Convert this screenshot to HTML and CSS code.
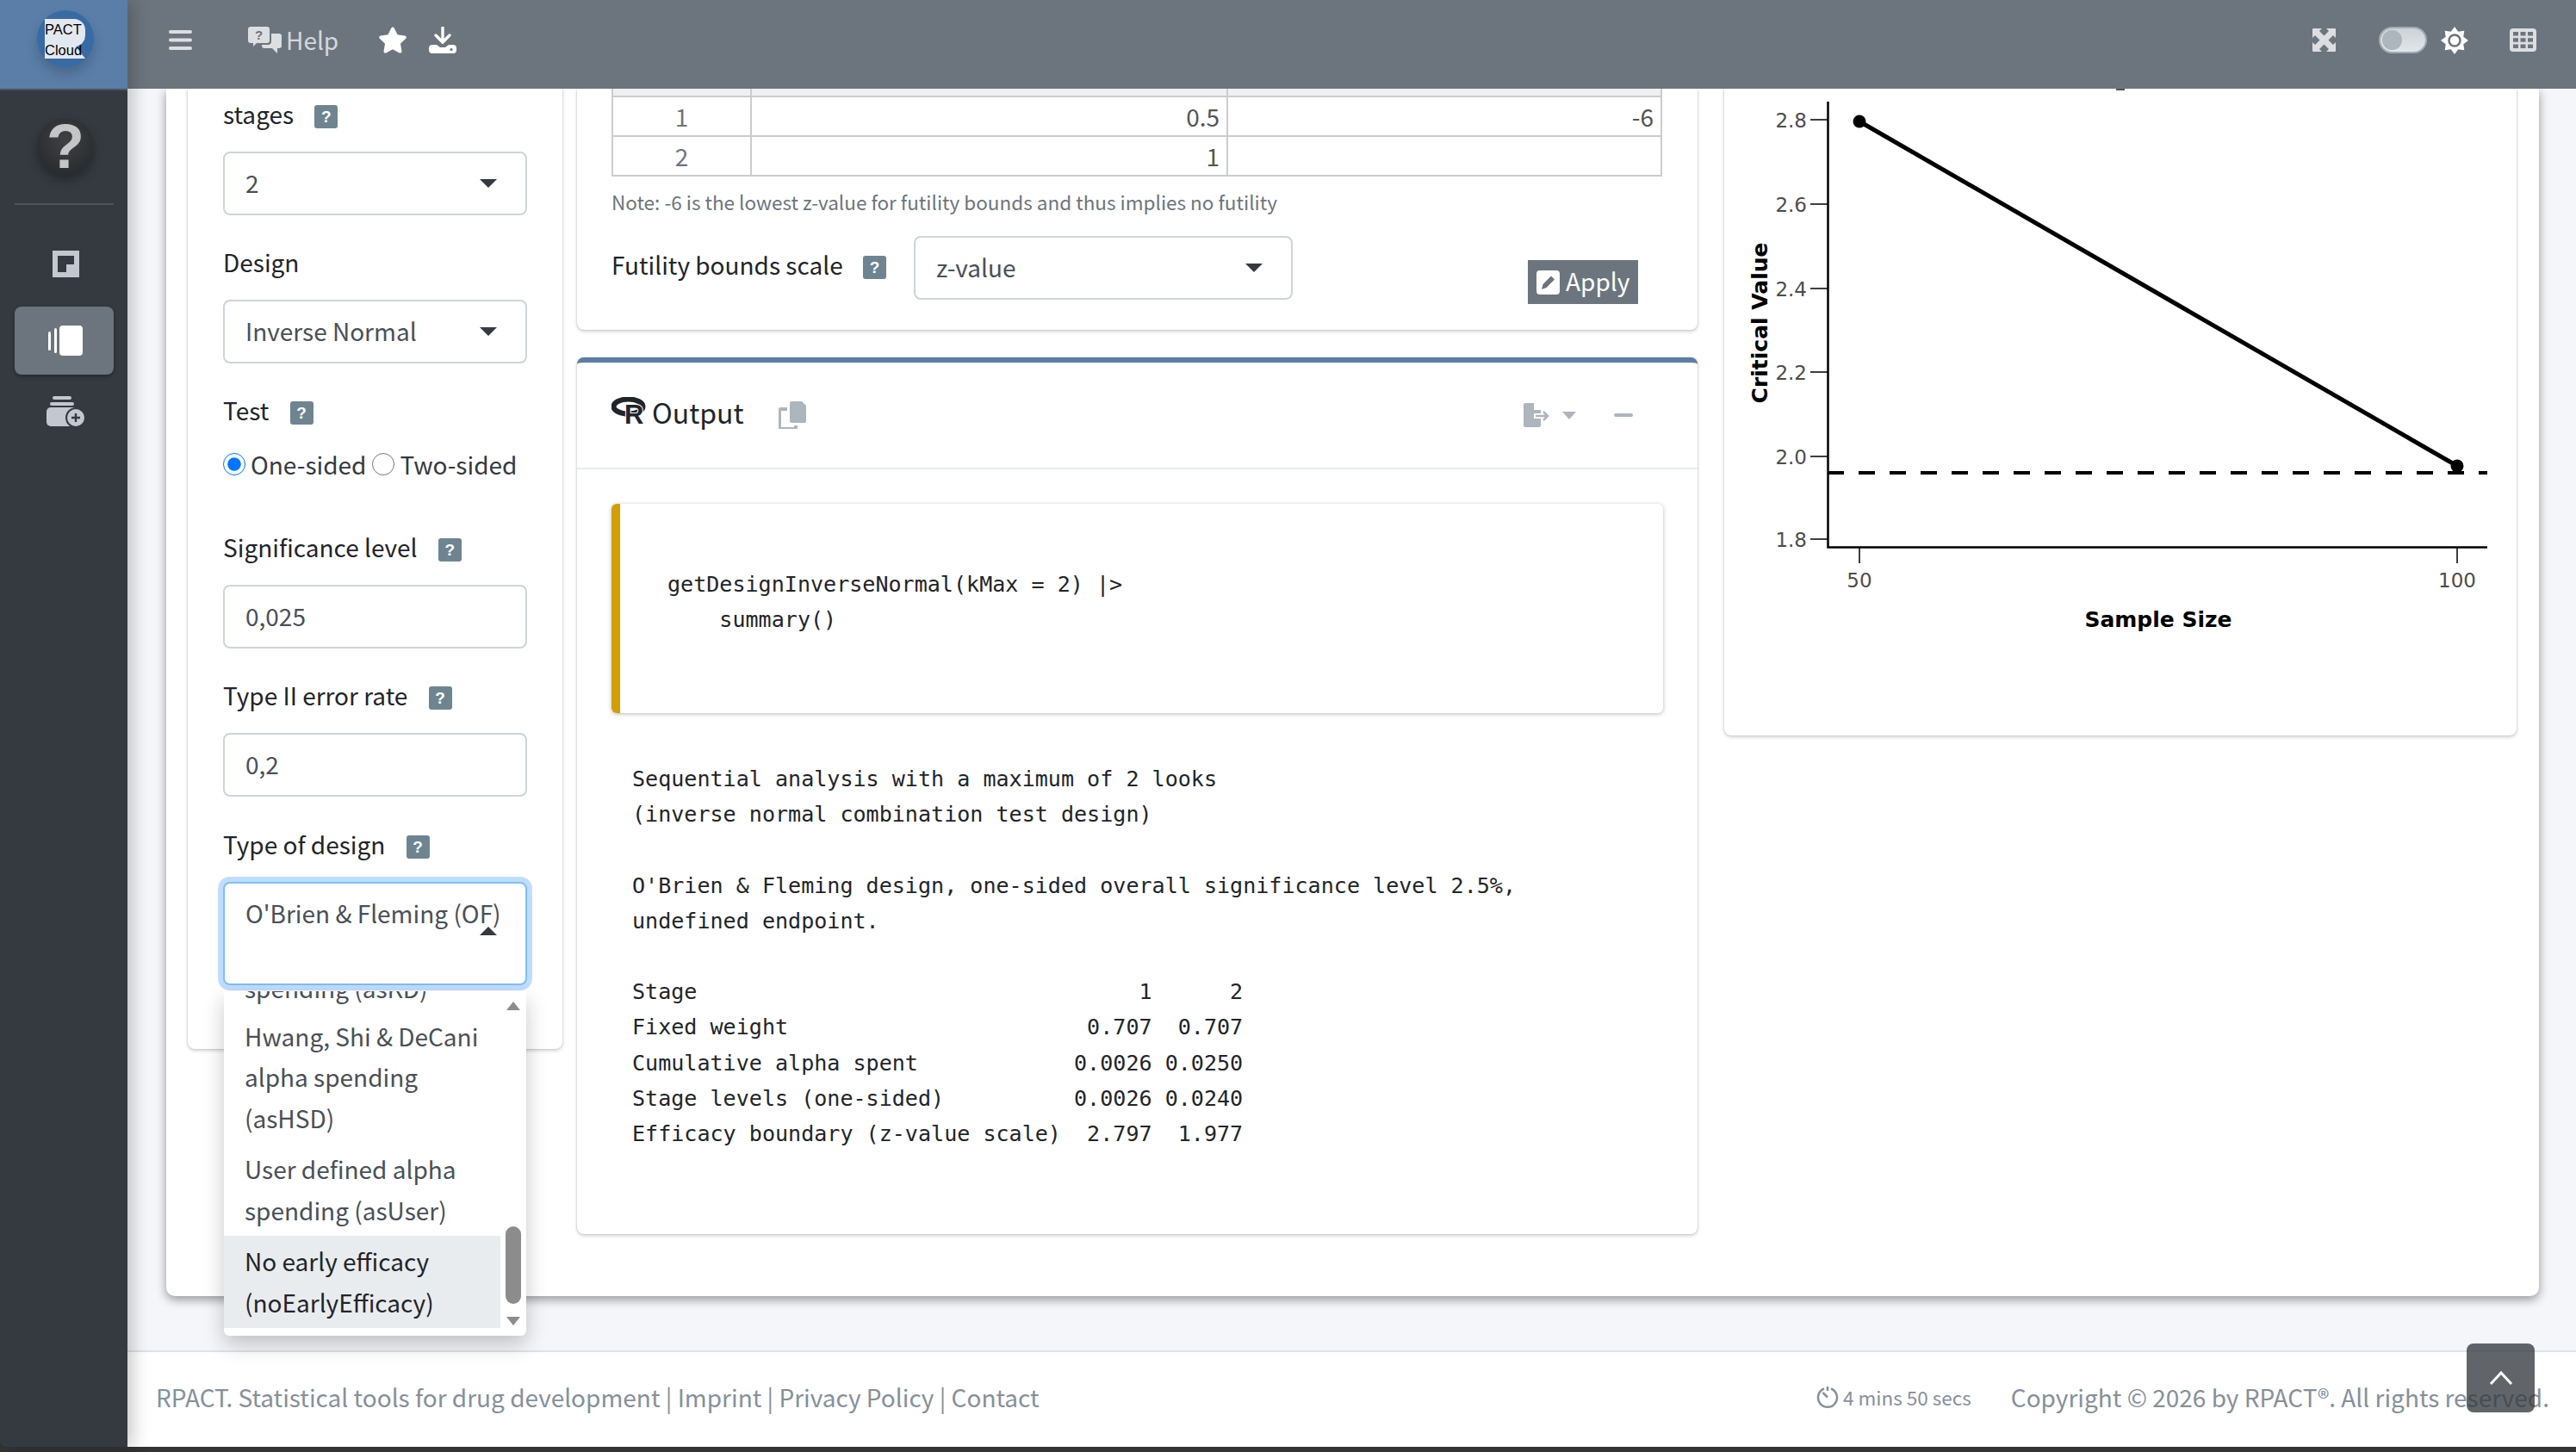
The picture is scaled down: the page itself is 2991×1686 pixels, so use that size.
FILE: index.html
```html
<!DOCTYPE html>
<html lang="en">
<head>
  <meta charset="UTF-8">
  <title>RPACT Cloud</title>
  <link rel="stylesheet" href="styles.css">
</head>
<body>
<div class="app">
  <aside class="sidebar">
    <div class="brand">
      <div class="brand-logo">
        <svg class="brand-r" viewBox="0 0 47 46"><path d="M0 0H34a13 13 0 0 1 13 13v6a13 13 0 0 1-11 13L47 46H0z" fill="#e3e8f0"/></svg>
        <span class="brand-text">PACT<br>Cloud</span>
      </div>
    </div>
    <div class="help-avatar"><span>?</span></div>
    <div class="side-line"></div>
    <nav class="side-nav">
      <a class="side-item">
        <svg width="31" height="31" viewBox="0 0 31 31"><path d="M0 0H31V31H0z" fill="#c2c7d0"/><path d="M6 6H25V16H16V25H6z" fill="#343a40"/></svg>
      </a>
      <a class="side-item active">
        <svg width="40" height="35" viewBox="0 0 40 35"><rect x="0" y="7" width="3" height="22" rx="1.5" fill="#fff"/><rect x="7" y="3" width="3" height="29" rx="1.5" fill="#fff"/><rect x="13" y="0" width="27" height="35" rx="4" fill="#fff"/></svg>
      </a>
      <a class="side-item">
        <svg width="44" height="35" viewBox="0 0 44 35"><rect x="7" y="0" width="22" height="4" rx="2" fill="#c2c7d0"/><rect x="4" y="7" width="28" height="4" rx="2" fill="#c2c7d0"/><rect x="0" y="13" width="36" height="22" rx="5" fill="#c2c7d0"/><circle cx="34" cy="25" r="11" fill="#c2c7d0" stroke="#343a40" stroke-width="2"/><path d="M29 25H39M34 20V30" stroke="#343a40" stroke-width="2.4"/></svg>
      </a>
    </nav>
  </aside>

  <div class="main">
    <header class="topbar">
      <svg class="hamburger" width="27" height="23" viewBox="0 0 27 23"><rect y="0" width="27" height="4" rx="2"/><rect y="9.5" width="27" height="4" rx="2"/><rect y="19" width="27" height="4" rx="2"/></svg>
      <a class="top-help">
        <svg width="39" height="31" viewBox="0 0 39 31"><path d="M3 0H22a3 3 0 0 1 3 3V16a3 3 0 0 1-3 3H10L6 23V19H3a3 3 0 0 1-3-3V3a3 3 0 0 1 3-3z" fill="#dcdee0"/><path d="M27 8H36a3 3 0 0 1 3 3V22a3 3 0 0 1-3 3H34V31L28 25H19a3 3 0 0 1-3-3V21H24a4 4 0 0 0 3-3z" fill="#dcdee0"/><text x="12.5" y="15" class="top-help-q">?</text></svg>
        <span class="top-help-text">Help</span>
      </a>
      <svg class="top-star" width="34" height="31" viewBox="0 0 576 512"><path d="M259.3 17.8L194 150.2 47.9 171.5c-26.2 3.8-36.7 36.1-17.7 54.6l105.7 103-25 145.5c-4.5 26.3 23.2 46 46.4 33.7L288 439.6l130.7 68.7c23.2 12.2 50.9-7.4 46.4-33.7l-25-145.5 105.7-103c19-18.5 8.5-50.8-17.7-54.6L382 150.2 316.7 17.8c-11.7-23.6-45.6-23.9-57.4 0z" fill="#fff"/></svg>
      <svg class="top-download" width="32" height="31" viewBox="0 0 32 31"><path d="M16 1V17M8 10L16 18L24 10" fill="none" stroke="#fff" stroke-width="3.4" stroke-linecap="round"/><path d="M4 21H9L13 24H19L23 21H28a4 4 0 0 1 4 4V27a4 4 0 0 1-4 4H4a4 4 0 0 1-4-4V25a4 4 0 0 1 4-4z" fill="#fff"/><circle cx="26" cy="26.5" r="1.6" fill="#6c757d"/></svg>
      <div class="top-right">
        <svg width="27" height="27" viewBox="0 0 27 27"><path d="M1 0H11L8 3L13.5 8.5L19 3L16 0H26a1 1 0 0 1 1 1V11L24 8L18.500 13.500L24 19L27 16V26a1 1 0 0 1-1 1H16L19 24L13.500 18.500L8 24L11 27H1a1 1 0 0 1-1-1V16L3 19L8.500 13.500L3 8L0 11V1a1 1 0 0 1 1-1z" fill="#dcdee0"/></svg>
        <span class="toggle"><span class="toggle-knob"></span></span>
        <svg class="top-sun" width="32" height="32" viewBox="0 0 32 32"><polygon points="16,0 20.200,5.700 27.300,4.700 26.300,11.800 32,16 26.300,20.200 27.300,27.300 20.200,26.300 16,32 11.800,26.300 4.700,27.300 5.700,20.200 0,16 5.700,11.800 4.700,4.700 11.800,5.700" fill="#fff"/><circle cx="16" cy="16" r="6.500" fill="#fff" stroke="#6c757d" stroke-width="2.500"/></svg>
        <svg class="top-grid" width="31" height="27" viewBox="0 0 31 27"><rect width="31" height="27" rx="4" fill="#dcdee0"/><g fill="#6c757d"><rect x="4" y="4" width="6" height="4.500"/><rect x="12.500" y="4" width="6" height="4.500"/><rect x="21" y="4" width="6" height="4.500"/><rect x="4" y="11.200" width="6" height="4.500"/><rect x="12.500" y="11.200" width="6" height="4.500"/><rect x="21" y="11.200" width="6" height="4.500"/><rect x="4" y="18.500" width="6" height="4.500"/><rect x="12.500" y="18.500" width="6" height="4.500"/><rect x="21" y="18.500" width="6" height="4.500"/></g></svg>
      </div>
    </header>

    <div class="content">
      <div class="outer-card">
        <section class="card input-card">
          <div class="field first">
            <div class="field-label">stages <span class="help-badge">?</span></div>
            <div class="select">2</div>
          </div>
          <div class="field">
            <div class="field-label">Design</div>
            <div class="select">Inverse Normal</div>
          </div>
          <div class="field">
            <div class="field-label">Test <span class="help-badge">?</span></div>
            <div class="radios">
              <label class="radio"><input type="radio" name="test" checked>One-sided</label>
              <label class="radio"><input type="radio" name="test">Two-sided</label>
            </div>
          </div>
          <div class="field signif">
            <div class="field-label">Significance level <span class="help-badge">?</span></div>
            <div class="text-input">0,025</div>
          </div>
          <div class="field">
            <div class="field-label">Type II error rate <span class="help-badge">?</span></div>
            <div class="text-input">0,2</div>
          </div>
          <div class="field type-design">
            <div class="field-label">Type of design <span class="help-badge">?</span></div>
            <div class="select open">O'Brien &amp; Fleming (OF)</div>
            <div class="dropdown">
              <div class="dropdown-list">
                <div class="option clipped">spending (asKD)</div>
                <div class="option">Hwang, Shi &amp; DeCani alpha spending (asHSD)</div>
                <div class="option">User defined alpha spending (asUser)</div>
                <div class="option selected">No early efficacy (noEarlyEfficacy)</div>
              </div>
              <div class="scrollbar">
                <span class="scroll-up"></span>
                <span class="scroll-thumb"></span>
                <span class="scroll-down"></span>
              </div>
            </div>
          </div>
        </section>

        <div class="middle">
          <section class="card bounds-card">
            <table class="bounds">
              <tr class="head"><th></th><th></th><th></th></tr>
              <tr><td class="stage">1</td><td>0.5</td><td>-6</td></tr>
              <tr><td class="stage">2</td><td>1</td><td></td></tr>
            </table>
            <p class="note">Note: -6 is the lowest z-value for futility bounds and thus implies no futility</p>
            <div class="scale-row">
              <div class="scale-label">Futility bounds scale <span class="help-badge">?</span></div>
              <div class="select scale-select">z-value</div>
              <button class="apply">
                <svg width="27" height="28" viewBox="0 0 27 28"><rect width="27" height="28" rx="4" fill="#fff"/><path d="M6 22L7.500 16L17 6.500L21 10.500L11.500 20z" fill="#6c757d"/></svg>
                Apply
              </button>
            </div>
          </section>

          <section class="card output-card">
            <div class="output-head">
              <svg class="r-logo" width="40" height="38" viewBox="0 0 40 38"><ellipse cx="19.500" cy="11" rx="17" ry="8.500" fill="none" stroke="#212529" stroke-width="6"/><text x="15" y="30.500" class="r-letter">R</text></svg>
              <span class="output-title">Output</span>
              <svg class="copy-icon" width="32" height="32" viewBox="0 0 32 32"><path d="M15 0H27L32 5V23a2 2 0 0 1-2 2H15a2 2 0 0 1-2-2V2a2 2 0 0 1 2-2z" fill="#adb5bd"/><path d="M10 9H3a2 2 0 0 0-2 2V30a2 2 0 0 0 2 2H18a2 2 0 0 0 2-2V28" fill="none" stroke="#adb5bd" stroke-width="4"/></svg>
              <div class="output-tools">
                <svg width="32" height="28" viewBox="0 0 32 28"><path d="M2 0H12V8H20V12H12V18H20V26a2 2 0 0 1-2 2H2a2 2 0 0 1-2-2V2a2 2 0 0 1 2-2z" fill="#adb5bd"/><path d="M14 15H27M23 10L28 15L23 20" fill="none" stroke="#adb5bd" stroke-width="2.500"/></svg>
                <span class="tool-caret"></span>
                <span class="tool-minus"></span>
              </div>
            </div>
            <pre class="code-box">getDesignInverseNormal(kMax = 2) |&gt;
    summary()</pre>
            <pre class="output-text">Sequential analysis with a maximum of 2 looks
(inverse normal combination test design)

O'Brien &amp; Fleming design, one-sided overall significance level 2.5%,
undefined endpoint.

Stage                                  1      2
Fixed weight                       0.707  0.707
Cumulative alpha spent            0.0026 0.0250
Stage levels (one-sided)          0.0026 0.0240
Efficacy boundary (z-value scale)  2.797  1.977</pre>
          </section>
        </div>

        <section class="card chart-card">
          <svg class="chart" width="920" height="751" viewBox="2002 103 920 751">
            <rect x="2457" y="103" width="10" height="2" fill="#555"/>
            <path d="M2122.500 118V635.500H2888" fill="none" stroke="#000" stroke-width="2.500"/>
            <path d="M2102 139H2122M2102 237H2122M2102 335H2122M2102 432H2122M2102 530H2122M2102 626H2122M2159 635V654M2853 635V654" stroke="#000" stroke-width="1.500"/>
            <g class="tick-y">
              <text x="2098" y="148">2.8</text>
              <text x="2098" y="246">2.6</text>
              <text x="2098" y="344">2.4</text>
              <text x="2098" y="441">2.2</text>
              <text x="2098" y="539">2.0</text>
              <text x="2098" y="635">1.8</text>
            </g>
            <g class="tick-x">
              <text x="2159" y="682">50</text>
              <text x="2853" y="682">100</text>
            </g>
            <line x1="2159" y1="141" x2="2853" y2="541" stroke="#000" stroke-width="5"/>
            <circle cx="2159" cy="141" r="7.500"/>
            <circle cx="2853" cy="541" r="7.500"/>
            <line x1="2122" y1="549" x2="2888" y2="549" stroke="#000" stroke-width="4" stroke-dasharray="19 17"/>
            <text x="2506" y="728" class="axis-title">Sample Size</text>
            <text transform="translate(2052 375) rotate(-90)" class="axis-title">Critical Value</text>
          </svg>
        </section>
      </div>
    </div>

    <footer class="footer">
      <div class="footer-left">RPACT. Statistical tools for drug development | <a>Imprint</a> | <a>Privacy Policy</a> | <a>Contact</a></div>
      <div class="footer-right">
        <span class="timer">
          <svg width="26" height="26" viewBox="0 0 26 26"><path d="M9 3.500A11 11 0 1 0 17 3.500" fill="none" stroke="#869099" stroke-width="2.500"/><path d="M13 1V6M7.500 8L13 13.500" fill="none" stroke="#869099" stroke-width="2.500"/></svg>
          4 mins 50 secs
        </span>
        <span>Copyright © 2026 by RPACT®. All rights reserved.</span>
      </div>
    </footer>
  </div>
</div>
<a class="to-top">
  <svg width="28" height="16" viewBox="0 0 28 16"><path d="M2 15L14 2L26 15" fill="none" stroke="#fff" stroke-width="3"/></svg>
</a>
</body>
</html>
```
FILE: styles.css
```css
* {
  box-sizing: border-box;
}
html, body {
  margin: 0;
  height: 100%;
}
body {
  font-family: "Noto Sans CJK SC", "Noto Sans", sans-serif;
  font-size: 28px;
  line-height: 40px;
  color: #212529;
  background: #333;
  overflow: hidden;
}
.app {
  display: flex;
  height: 1680px;
}

/* sidebar */
.sidebar {
  width: 148px;
  flex: none;
  background: #343a40;
  box-shadow: 6px 0 20px rgba(0,0,0,0.22);
  border-bottom-left-radius: 8px;
  display: flex;
  flex-direction: column;
  align-items: center;
  position: relative;
  z-index: 2;
}
.brand {
  width: 100%;
  height: 105px;
  flex: none;
  background: #5a7ea8;
  border-bottom: 2px solid #4b545c;
  display: flex;
  align-items: center;
  justify-content: center;
  padding-bottom: 13px;
}
.brand-logo {
  width: 66px;
  height: 66px;
  margin-left: 4px;
  border-radius: 50%;
  background: #376ba4;
  box-shadow: 0 8px 14px rgba(0,0,0,0.18);
  position: relative;
}
.brand-r {
  position: absolute;
  left: 9px;
  top: 10px;
  width: 47px;
  height: 46px;
}
.brand-text {
  position: absolute;
  left: 9px;
  top: 10px;
  font-family: "Liberation Sans", sans-serif;
  font-size: 16.500px;
  line-height: 24px;
  color: #000;
  white-space: nowrap;
}
.help-avatar {
  width: 66px;
  height: 66px;
  margin-top: 32px;
  margin-left: 4px;
  border-radius: 50%;
  background: radial-gradient(circle at 50% 40%, #3f4144, #232426);
  box-shadow: 0 6px 12px rgba(0,0,0,0.3);
  color: #c5c5c5;
  font-family: "Liberation Sans", sans-serif;
  font-weight: bold;
  font-size: 72px;
  line-height: 66px;
  text-align: center;
  flex: none;
}
.side-line {
  width: 115px;
  height: 2px;
  margin-top: 33px;
  background: #4b545c;
  flex: none;
}
.side-nav {
  width: 115px;
  margin-top: 53px;
  display: flex;
  flex-direction: column;
  align-items: center;
}
.side-item {
  display: flex;
  align-items: center;
  justify-content: center;
  width: 100%;
}
.side-item svg {
  margin-left: 4px;
}
.side-item.active {
  height: 79px;
  margin-top: 34px;
  margin-bottom: 25px;
  border-radius: 8px;
  background: #6c757d;
  box-shadow: 0 2px 5px rgba(0,0,0,0.3);
}

/* top bar */
.main {
  flex: 1;
  min-width: 0;
  display: flex;
  flex-direction: column;
}
.topbar {
  height: 103px;
  flex: none;
  background: #6c757d;
  display: flex;
  align-items: center;
  padding: 0 46px 10px 48px;
  position: relative;
  z-index: 1;
}
.hamburger {
  fill: #dcdee0;
  margin-right: 65px;
}
.top-help {
  display: flex;
  align-items: center;
  gap: 5px;
  color: #d5d8db;
  margin-right: 46px;
}
.top-help-text {
  line-height: 36px;
  margin-bottom: 2px;
}
.top-help-q {
  font-family: "Liberation Sans", sans-serif;
  font-weight: bold;
  font-size: 15px;
  text-anchor: middle;
  fill: #6c757d;
}
.top-star {
  margin-right: 25px;
}
.top-right {
  margin-left: auto;
  display: flex;
  align-items: center;
}
.toggle {
  width: 56px;
  height: 31px;
  margin-left: 50px;
  margin-right: 16px;
  border-radius: 16px;
  border: 2px solid #a3abb3;
  background: linear-gradient(#cdd2d6, #e3e6e9);
  display: block;
  padding: 2px;
}
.toggle-knob {
  display: block;
  width: 23px;
  height: 23px;
  border-radius: 50%;
  background: #adb5bd;
}
.top-grid {
  margin-left: 48px;
}

/* page */
.content {
  flex: 1;
  min-height: 0;
  background: #f4f6f9;
  padding: 0 43px 63px 45px;
}
.outer-card {
  height: 100%;
  background: #fff;
  border-radius: 0 0 10px 10px;
  box-shadow: 0 4px 12px rgba(0,0,0,0.4);
  display: flex;
  align-items: flex-start;
  padding: 0 26px 0 25px;
}
.card {
  background: #fff;
  border-radius: 0 0 8px 8px;
  box-shadow: 0 0 2px rgba(0,0,0,0.2), 0 2px 4px rgba(0,0,0,0.18);
}
.help-badge {
  display: inline-block;
  width: 27px;
  height: 27px;
  margin-left: 18px;
  border-radius: 3px;
  background: #6f8491;
  color: #fff;
  font-family: "Liberation Sans", sans-serif;
  font-weight: bold;
  font-size: 19px;
  line-height: 27px;
  text-align: center;
  vertical-align: 2px;
}

/* inputs */
.input-card {
  width: 435px;
  height: 1115px;
  flex: none;
  padding: 12px 41px 0;
}
.field {
  margin-top: 37px;
  position: relative;
}
.field.first {
  margin-top: 0;
}
.field.signif {
  margin-top: 61px;
}
.field-label {
  height: 40px;
  line-height: 34px;
  margin-bottom: 21px;
  white-space: nowrap;
}
.type-design {
  margin-top: 38px;
}
.select, .text-input {
  height: 74px;
  border: 2px solid #ced4da;
  border-radius: 8px;
  padding: 14px 24px;
  color: #495057;
  position: relative;
  background: #fff;
}
.select::after {
  content: "";
  position: absolute;
  right: 33px;
  top: 30px;
  border-top: 10px solid #343a40;
  border-left: 10px solid transparent;
  border-right: 10px solid transparent;
}
.select.open {
  height: 120px;
  border-color: #80bdff;
  box-shadow: 0 0 0 6px rgba(0,123,255,0.25);
  padding-top: 14px;
  white-space: nowrap;
}
.select.open::after {
  top: 50px;
  border-top: none;
  border-bottom: 10px solid #343a40;
}
.radios {
  display: flex;
  gap: 7px;
  margin-top: 22px;
  white-space: nowrap;
}
.radio {
  display: flex;
  align-items: center;
  gap: 6px;
  color: #343a40;
  line-height: 36px;
}
.radio input {
  width: 26px;
  height: 26px;
  margin: 0;
}
.dropdown {
  position: absolute;
  left: 1px;
  top: 188px;
  width: 351px;
  height: 400px;
  background: #fff;
  border-radius: 0 0 6px 6px;
  box-shadow: 0 10px 24px rgba(0,0,0,0.22);
  overflow: hidden;
  z-index: 3;
}
.dropdown-list {
  width: 321px;
  margin-top: -33px;
  color: #495057;
  line-height: 47.500px;
}
.option {
  padding: 6px 24px;
}
.option.clipped {
  padding: 6px 24px 2px;
}
.option.selected {
  background: #e9ecef;
  color: #212529;
}
.scrollbar {
  position: absolute;
  right: 0;
  top: 0;
  bottom: 0;
  width: 30px;
}
.scroll-up, .scroll-down {
  position: absolute;
  left: 7px;
  border-left: 8px solid transparent;
  border-right: 8px solid transparent;
}
.scroll-up {
  top: 12px;
  border-bottom: 10px solid #8c8c8c;
}
.scroll-down {
  bottom: 12px;
  border-top: 10px solid #8c8c8c;
}
.scroll-thumb {
  position: absolute;
  left: 6px;
  top: 273px;
  width: 18px;
  height: 90px;
  border-radius: 9px;
  background: #8c8c8c;
}

/* middle column */
.middle {
  width: 1301px;
  flex: none;
  margin-left: 17px;
}
.bounds-card {
  height: 280px;
  padding: 0 40px;
}
.bounds {
  width: 1220px;
  table-layout: fixed;
  border-collapse: collapse;
}
.bounds td, .bounds th {
  border: 2px solid #ccc;
  padding: 0 8px;
  text-align: right;
  color: #555;
  font-size: 28px;
}
.bounds td {
  height: 46px;
  line-height: 36px;
}
.bounds th {
  height: 9px;
  padding: 0;
  background: #f0f0f0;
  border-top: none;
}
.bounds td:first-child, .bounds th:first-child {
  width: 161px;
}
.bounds td:nth-child(2), .bounds th:nth-child(2) {
  width: 553px;
}
.bounds td.stage {
  text-align: center;
  color: #6c757d;
}
.note {
  margin: 10px 0 0;
  font-size: 22.500px;
  line-height: 38px;
  color: #6c757d;
}
.scale-row {
  display: flex;
  align-items: flex-start;
  margin-top: 21px;
}
.scale-label {
  margin-top: 13px;
  white-space: nowrap;
}
.scale-label .help-badge {
  margin-left: 17px;
}
.scale-select {
  width: 440px;
  margin-left: 32px;
}
.apply {
  margin-left: auto;
  margin-right: 29px;
  margin-top: 28px;
  height: 51px;
  width: 128px;
  border: none;
  background: #6c757d;
  color: #fff;
  font-family: inherit;
  font-size: 28px;
  line-height: 44px;
  display: flex;
  align-items: center;
  gap: 7px;
  padding: 0 0 4px 10px;
}
.apply svg {
  margin-top: 4px;
}
.output-card {
  margin-top: 32px;
  height: 1018px;
  border-top: 6px solid #5a7ea8;
  border-radius: 8px;
}
.output-head {
  height: 124px;
  border-bottom: 2px solid #e9ecef;
  display: flex;
  align-items: center;
  padding: 0 75px 0 40px;
}
.r-logo {
  margin-bottom: 4px;
}
.output-title {
  margin-left: 7px;
  font-size: 32px;
  line-height: 36px;
  margin-bottom: 8px;
}
.copy-icon {
  margin-left: 40px;
}
.output-tools {
  margin-left: auto;
  display: flex;
  align-items: center;
}
.tool-caret {
  margin-left: 13px;
  border-top: 9px solid #adb5bd;
  border-left: 8px solid transparent;
  border-right: 8px solid transparent;
}
.tool-minus {
  margin-left: 44px;
  width: 22px;
  height: 4px;
  border-radius: 2px;
  background: #adb5bd;
}
pre {
  font-family: "DejaVu Sans Mono", monospace;
  font-size: 25.070px;
  line-height: 41.200px;
  margin: 0;
}
.code-box {
  margin: 40px 40px 0;
  height: 243px;
  padding: 73px 0 0 55px;
  border-left: 10px solid #d39e00;
  border-radius: 6px;
  box-shadow: 0 1px 5px rgba(0,0,0,0.28);
}
.output-text {
  margin: 56px 0 0 64px;
}

/* chart */
.chart-card {
  width: 920px;
  height: 751px;
  flex: none;
  margin-left: 31px;
}
.chart {
  display: block;
}
.tick-y text, .tick-x text {
  font-family: "DejaVu Sans", sans-serif;
  font-size: 23px;
  fill: #4d4d4d;
}
.tick-y text {
  text-anchor: end;
}
.tick-x text {
  text-anchor: middle;
}
.axis-title {
  font-family: "DejaVu Sans", sans-serif;
  font-weight: bold;
  font-size: 25px;
  text-anchor: middle;
}
.r-letter {
  font-family: "Liberation Sans", sans-serif;
  font-weight: bold;
  font-size: 31px;
  fill: #212529;
  stroke: #fff;
  stroke-width: 2px;
  paint-order: stroke;
}

/* footer */
.footer {
  height: 112px;
  flex: none;
  background: #fff;
  border-top: 2px solid #dee2e6;
  color: #869099;
  display: flex;
  align-items: center;
  justify-content: space-between;
  padding: 0 31px 6px 33px;
}
.footer-right {
  display: flex;
  align-items: center;
  gap: 46px;
}
.timer {
  display: flex;
  align-items: center;
  gap: 5px;
  font-size: 22.500px;
}
.to-top {
  position: fixed;
  left: 2864px;
  top: 1560px;
  width: 79px;
  height: 80px;
  border-radius: 8px;
  background: rgba(52,58,64,0.78);
  display: flex;
  align-items: center;
  justify-content: center;
  z-index: 4;
}
```
